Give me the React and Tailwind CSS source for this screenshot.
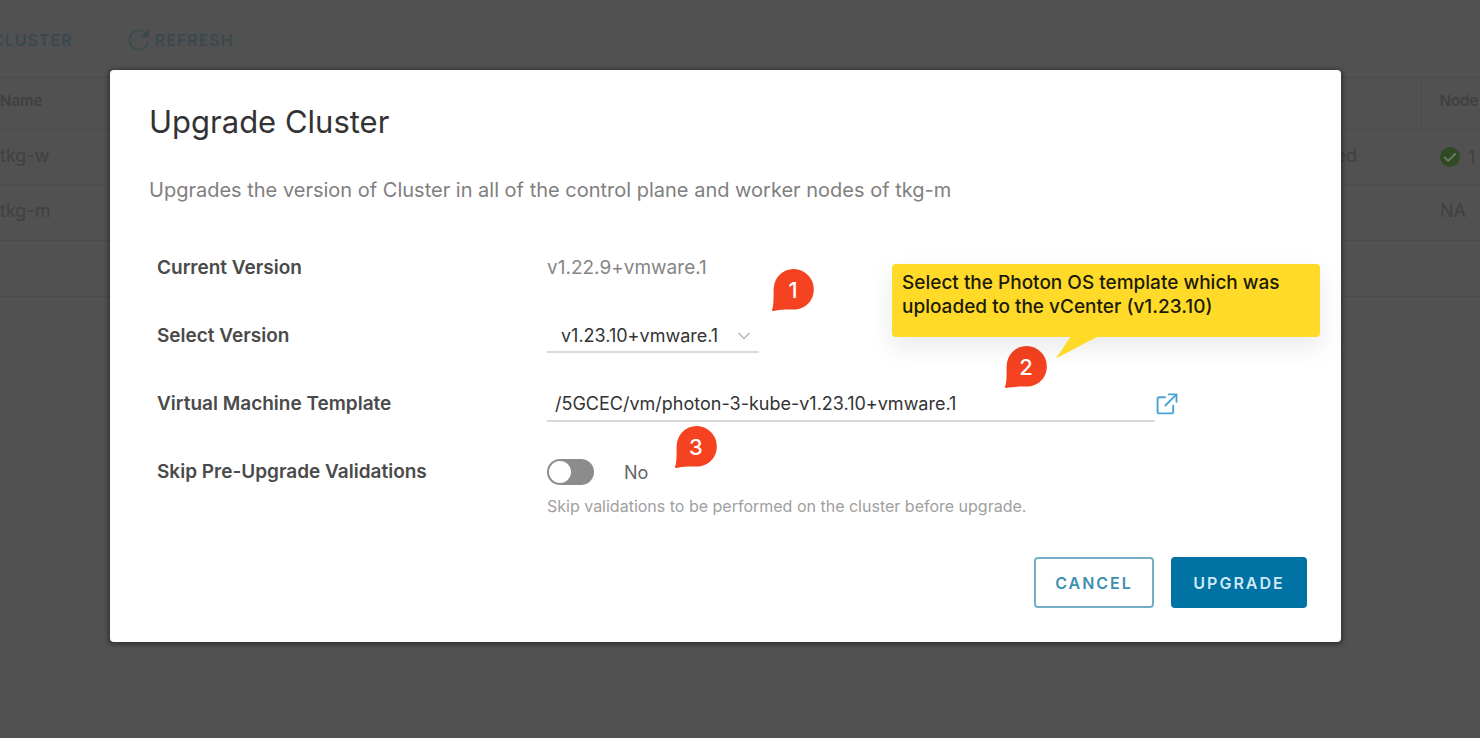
import { useState } from "react";

function RefreshIcon() {
  return (
    <svg viewBox="0 0 24 24" className="size-6" fill="none" stroke="currentColor" strokeWidth="1.6" aria-hidden="true">
      <path d="M21 14.500A9.500 9.500 0 1 1 17.200 4.200" strokeLinecap="round" />
      <path d="M21.500 1.800v6.800h-6.800z" fill="currentColor" strokeWidth="1" strokeLinejoin="round" />
    </svg>
  );
}

function PopOutIcon() {
  return (
    <svg viewBox="0 0 22 22" className="size-[22px]" fill="none" stroke="currentColor" strokeWidth="1.9" strokeLinecap="round" strokeLinejoin="round" aria-hidden="true">
      <path d="M9 4.200H3.200C2.300 4.200 1.600 4.900 1.600 5.800v13c0 .9.7 1.600 1.600 1.600h12.400c.9 0 1.600-.7 1.600-1.600v-6" />
      <path d="M12.800 1.400h7.700v7.400" />
      <path d="M20.200 1.700 9.400 12.500" />
    </svg>
  );
}

function Pin({ number, className }) {
  return (
    <div className={`absolute grid size-[42px] place-items-center text-[22px] font-medium text-white ${className}`}>
      <svg viewBox="0 0 42 42" className="col-start-1 row-start-1 size-[42px]" aria-hidden="true">
        <path
          d="M21.5 0A20 20.3 0 0 1 41.8 20.5C41.8 32 33 40.6 21.5 40.6C16 40.6 7 40.4 1.6 42A1.2 1.2 0 0 1 .2 40.2C1.8 37 1.6 27 1.6 20.5A20 20.3 0 0 1 21.5 0Z"
          fill="#f54220"
        />
      </svg>
      <span className="col-start-1 row-start-1">{number}</span>
    </div>
  );
}

function Background() {
  return (
    <div className="text-[#404040]">
      <div className="flex h-[77px] items-center gap-[54px] pt-[2px] text-[16px] font-semibold tracking-[1px] text-[#3a494f]">
        <button type="button" className="-ml-2">CLUSTER</button>
        <button type="button" className="flex items-center gap-1">
          <RefreshIcon />
          REFRESH
        </button>
      </div>
      <table className="w-full table-fixed border-collapse border-y border-[#4a4a4a] text-left text-[18px]">
        <colgroup>
          <col />
          <col className="w-[120px]" />
          <col className="w-[59px]" />
        </colgroup>
        <thead className="text-[15px]">
          <tr className="h-[52px]">
            <th scope="col" className="pb-1 font-semibold">Name</th>
            <th aria-label="Status" />
            <th scope="col" className="overflow-hidden border-l border-[#4c4c4c] pb-1 pl-[18px] font-semibold">Node</th>
          </tr>
        </thead>
        <tbody>
          <tr className="h-[55px] border-t border-[#4a4a4a]">
            <td className="pb-1">tkg-w</td>
            <td className="pr-16 pb-1 text-right">ed</td>
            <td className="pl-[19px]">
              <span className="flex items-center gap-2">
                <svg viewBox="0 0 20 20" className="size-5 shrink-0" aria-hidden="true">
                  <circle cx="10" cy="10" r="10" fill="#304a24" />
                  <path d="m4.6 10.4 3.6 3.4 7-6.8" fill="none" stroke="#6d7b66" strokeWidth="1.8" strokeLinecap="round" strokeLinejoin="round" />
                </svg>
                1
              </span>
            </td>
          </tr>
          <tr className="h-[56px] border-t border-[#4c4c4c]">
            <td className="pb-1">tkg-m</td>
            <td />
            <td className="pb-1 pl-[19px]">NA</td>
          </tr>
        </tbody>
      </table>
      <div className="h-[56px] border-b border-[#4a4a4a]" />
    </div>
  );
}

const label = "w-[390px] shrink-0 text-[19px] font-semibold text-[#4a4a4a]";

function UpgradeDialog() {
  const [skip, setSkip] = useState(false);
  const [template, setTemplate] = useState("/5GCEC/vm/photon-3-kube-v1.23.10+vmware.1");
  return (
    <div role="dialog" aria-labelledby="title" className="relative w-full rounded-[4px] bg-white pt-8 pr-[34px] pb-[34px] pl-[39px] shadow-[0_1px_4px_2px_rgba(0,0,0,0.35)]">
      <h1 id="title" className="text-[31px] leading-10 text-[#333]">Upgrade Cluster</h1>
      <p className="mt-8 text-[20px] leading-8 text-[#808080]">
        Upgrades the version of Cluster in all of the control plane and worker nodes of tkg-m
      </p>
      <form className="mt-7 pl-2" onSubmit={(e) => e.preventDefault()}>
        <div className="flex h-[68px] items-center">
          <span className={label}>Current Version</span>
          <span className="text-[19px] text-[#858585]">v1.22.9+vmware.1</span>
        </div>
        <div className="flex h-[68px] items-center">
          <label htmlFor="version" className={label}>Select Version</label>
          <div className="grid w-[212px] items-center">
            <select id="version" className="col-start-1 row-start-1 h-[34px] w-full appearance-none border-b-2 border-[#dadada] bg-transparent pl-[14px] text-[18px] text-[#333]">
              <option>v1.23.10+vmware.1</option>
            </select>
            <svg viewBox="0 0 14 8" className="pointer-events-none col-start-1 row-start-1 mr-2 h-2 w-[14px] justify-self-end" fill="none" stroke="#b8b8b8" strokeWidth="1.5" aria-hidden="true">
              <path d="m1.5 1 5.5 5.5L12.5 1" />
            </svg>
          </div>
        </div>
        <div className="flex h-[68px] items-center">
          <label htmlFor="template" className={label}>Virtual Machine Template</label>
          <input
            id="template"
            type="text"
            value={template}
            onChange={(e) => setTemplate(e.target.value)}
            className="h-[36px] w-[608px] min-w-0 border-b-2 border-[#dadada] bg-transparent px-2 text-[18px] text-[#333]"
          />
          <a href="#template" aria-label="Browse templates" className="ml-px text-[#4ba3d3]">
            <PopOutIcon />
          </a>
        </div>
        <div className="flex h-[68px] items-center">
          <label htmlFor="skip" className={label}>Skip Pre-Upgrade Validations</label>
          <input
            id="skip"
            type="checkbox"
            role="switch"
            checked={skip}
            onChange={(e) => setSkip(e.target.checked)}
            className="flex h-[26px] w-[47px] appearance-none items-center rounded-full bg-[#8c8c8c] px-[2px] before:size-[22px] before:rounded-full before:bg-white checked:bg-[#5aa220] checked:before:ml-auto"
          />
          <span className="ml-[30px] text-[18px] text-[#666]">{skip ? "Yes" : "No"}</span>
        </div>
        <p className="-mt-[10px] pl-[390px] text-[16px] leading-5 text-[#a0a0a0]">
          Skip validations to be performed on the cluster before upgrade.
        </p>
        <div className="mt-[41px] flex justify-end gap-[17px] text-[16px] font-semibold tracking-[2px]">
          <button type="button" className="h-[51px] w-[120px] rounded-[4px] border-2 border-[#74afc8] text-[#3f8fb0]">CANCEL</button>
          <button type="submit" className="h-[51px] w-[136px] rounded-[4px] bg-[#0072a3] text-[#cfe8f3]">UPGRADE</button>
        </div>
      </form>

      <Pin number="1" className="top-[199px] left-[662px]" />
      <Pin number="2" className="top-[276px] left-[895px]" />
      <Pin number="3" className="top-[356px] left-[565px]" />
      <div className="absolute top-[194px] left-[782px] h-[73px] w-[428px] rounded-[4px] bg-[#ffda29] pt-[7px] pr-4 pl-[10px] text-[19px] leading-6 font-medium text-[#1c1a08] shadow-[0_10px_24px_2px_rgba(0,0,0,0.08)]">
        Select the Photon OS template which was uploaded to the vCenter (v1.23.10)
        <svg viewBox="0 0 44 23" className="absolute top-[72px] left-[164px] h-[23px] w-11" aria-hidden="true">
          <path d="M15 0H44L38 2.5 0 22.5Z" fill="#ffda29" />
        </svg>
      </div>
    </div>
  );
}

export default function App() {
  return (
    <div className="relative min-h-screen overflow-hidden bg-[#515151] font-['Inter',sans-serif]">
      <Background />
      <div className="absolute inset-0 pt-[70px] pr-[139px] pl-[110px]">
        <UpgradeDialog />
      </div>
    </div>
  );
}
